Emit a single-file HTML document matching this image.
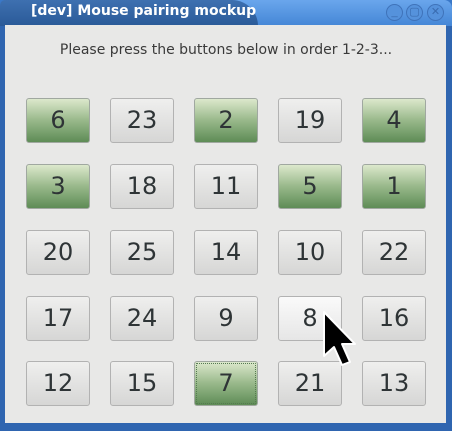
<!DOCTYPE html>
<html><head><meta charset="utf-8"><style>
*{margin:0;padding:0;box-sizing:border-box}
body{width:452px;height:431px;overflow:hidden;background:#3a78c8;font-family:"Liberation Sans","DejaVu Sans",sans-serif;position:relative}
.top{position:absolute;left:0;top:0;width:452px;height:26px;background:linear-gradient(#6aa6ec,#4486d6);border-radius:8px 8px 0 0}
.tab{position:absolute;left:0;top:0;width:258px;height:26px;background:linear-gradient(#3e70b0,#2a5a98);border-radius:8px 40px 0 0}
.title{position:absolute;left:31px;top:3px;color:#fff;font-weight:bold;font-size:14px;font-family:"DejaVu Sans",sans-serif}
.wb{position:absolute;top:4px;width:17px;height:17px;border-radius:50%;background:#5592dc;border:1px solid #3f73ba;color:#3a6cb0;font-size:11px;line-height:15px;text-align:center}
.frame{position:absolute;left:0;top:24px;width:452px;height:407px;background:#2f65b0}
.content{position:absolute;left:5px;top:25px;width:441px;height:398px;background:#e8e8e7}
.label{position:absolute;left:0;top:42px;width:452px;text-align:center;font-size:14px;color:#3a3a3a;font-family:"DejaVu Sans",sans-serif}
.b{position:absolute;width:64px;height:45px;border:1px solid #b2b2b2;border-radius:3px;background:linear-gradient(#efefee,#d6d6d5);font-size:24px;color:#2e3436;text-align:center;line-height:43px;font-family:"DejaVu Sans",sans-serif}
.g{background:linear-gradient(#dce8cc,#98b88a 50%,#5e8c56);border-color:#a0a8a0}
.h{background:linear-gradient(#fafafa,#e6e6e6)}
.f{outline:1px dotted #557a50;outline-offset:-3px}
</style></head><body>
<div class="frame"></div>
<div class="top"></div><div class="tab"></div>
<div class="title">[dev] Mouse pairing mockup</div>
<div class="wb" style="left:386px">_</div><div class="wb" style="left:406px">▢</div><div class="wb" style="left:427px">✕</div>
<div class="content"></div>
<div class="label">Please press the buttons below in order 1-2-3...</div>
<div class="b g" style="left:26px;top:98px">6</div>
<div class="b" style="left:110px;top:98px">23</div>
<div class="b g" style="left:194px;top:98px">2</div>
<div class="b" style="left:278px;top:98px">19</div>
<div class="b g" style="left:362px;top:98px">4</div>
<div class="b g" style="left:26px;top:164px">3</div>
<div class="b" style="left:110px;top:164px">18</div>
<div class="b" style="left:194px;top:164px">11</div>
<div class="b g" style="left:278px;top:164px">5</div>
<div class="b g" style="left:362px;top:164px">1</div>
<div class="b" style="left:26px;top:230px">20</div>
<div class="b" style="left:110px;top:230px">25</div>
<div class="b" style="left:194px;top:230px">14</div>
<div class="b" style="left:278px;top:230px">10</div>
<div class="b" style="left:362px;top:230px">22</div>
<div class="b" style="left:26px;top:296px">17</div>
<div class="b" style="left:110px;top:296px">24</div>
<div class="b" style="left:194px;top:296px">9</div>
<div class="b h" style="left:278px;top:296px">8</div>
<div class="b" style="left:362px;top:296px">16</div>
<div class="b" style="left:26px;top:361px">12</div>
<div class="b" style="left:110px;top:361px">15</div>
<div class="b g f" style="left:194px;top:361px">7</div>
<div class="b" style="left:278px;top:361px">21</div>
<div class="b" style="left:362px;top:361px">13</div>
<svg style="position:absolute;left:320px;top:308px" width="40" height="60" viewBox="0 0 40 60">
<path d="M4 4 L4 48 L14 39 L22 57 L30 54 L22 36 L35 36 Z" fill="#000" stroke="#fff" stroke-width="2" stroke-linejoin="round"/>
</svg>
</body></html>
